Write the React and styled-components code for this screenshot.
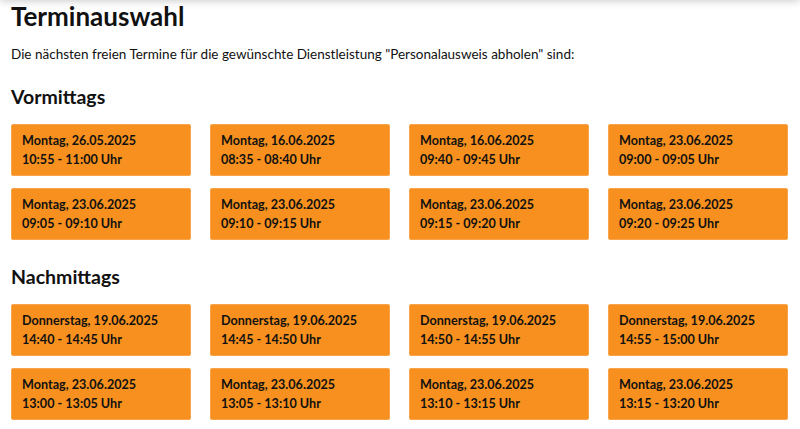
import React from 'react'
import styled, { createGlobalStyle } from 'styled-components'

const GlobalStyle = createGlobalStyle`
  html, body {
    margin: 0;
    padding: 0;
    background: #fff;
  }
  body {
    font-family: Lato, "Open Sans", sans-serif;
    color: #111;
  }
`

const Page = styled.div`
  position: relative;
  display: flex;
  flex-direction: column;
  align-items: flex-start;
  width: 800px;
  height: 429px;
  overflow: hidden;
  padding: 0 11px;
  box-sizing: border-box;

  /* shadow of the site header sitting just above the page */
  &::before {
    content: '';
    position: absolute;
    top: -10px;
    left: 0;
    right: 0;
    height: 10px;
    box-shadow: 0 0 10px rgba(0, 0, 0, 0.25);
  }
`

const Title = styled.h1`
  margin: 0;
  font-size: 26px;
  line-height: 32px;
  font-weight: 700;
`

const Intro = styled.p`
  margin: 12px 0 0;
  font-size: 13.5px;
  line-height: 20px;
`

const SectionTitle = styled.h2`
  margin: 20px 0 0;
  font-size: 19.5px;
  line-height: 26px;
  font-weight: 700;
`

const SlotGrid = styled.div`
  display: grid;
  grid-template-columns: repeat(4, 180px);
  column-gap: 19px;
  row-gap: 12px;
  margin: 14px 0 4px;
`

const Slot = styled.button`
  height: 52px;
  box-sizing: border-box;
  padding: 6px 10px;
  background: #f7901e;
  border: 1px solid #f9a44a;
  border-radius: 2px;
  text-align: left;
  font-family: inherit;
  font-size: 12.6px;
  font-weight: 700;
  line-height: 19px;
  color: #111;
  cursor: pointer;
`

const Line = styled.div``

const morning = [
  ['Montag, 26.05.2025', '10:55 - 11:00 Uhr'],
  ['Montag, 16.06.2025', '08:35 - 08:40 Uhr'],
  ['Montag, 16.06.2025', '09:40 - 09:45 Uhr'],
  ['Montag, 23.06.2025', '09:00 - 09:05 Uhr'],
  ['Montag, 23.06.2025', '09:05 - 09:10 Uhr'],
  ['Montag, 23.06.2025', '09:10 - 09:15 Uhr'],
  ['Montag, 23.06.2025', '09:15 - 09:20 Uhr'],
  ['Montag, 23.06.2025', '09:20 - 09:25 Uhr'],
]

const afternoon = [
  ['Donnerstag, 19.06.2025', '14:40 - 14:45 Uhr'],
  ['Donnerstag, 19.06.2025', '14:45 - 14:50 Uhr'],
  ['Donnerstag, 19.06.2025', '14:50 - 14:55 Uhr'],
  ['Donnerstag, 19.06.2025', '14:55 - 15:00 Uhr'],
  ['Montag, 23.06.2025', '13:00 - 13:05 Uhr'],
  ['Montag, 23.06.2025', '13:05 - 13:10 Uhr'],
  ['Montag, 23.06.2025', '13:10 - 13:15 Uhr'],
  ['Montag, 23.06.2025', '13:15 - 13:20 Uhr'],
]

const Slots = ({ items }) => (
  <SlotGrid>
    {items.map(([day, time], i) => (
      <Slot key={i}>
        <Line>{day}</Line>
        <Line>{time}</Line>
      </Slot>
    ))}
  </SlotGrid>
)

const App = () => (
  <>
    <GlobalStyle />
    <Page>
      <Title>Terminauswahl</Title>
      <Intro>
        Die nächsten freien Termine für die gewünschte Dienstleistung "Personalausweis abholen" sind:
      </Intro>
      <SectionTitle>Vormittags</SectionTitle>
      <Slots items={morning} />
      <SectionTitle>Nachmittags</SectionTitle>
      <Slots items={afternoon} />
    </Page>
  </>
)

export default App
